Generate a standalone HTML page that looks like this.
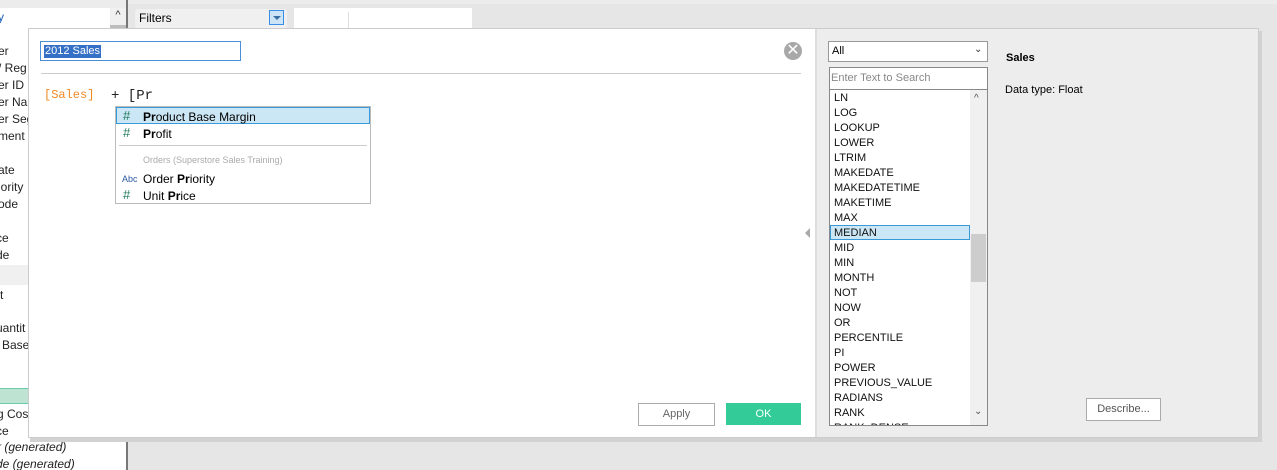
<!DOCTYPE html>
<html><head><meta charset="utf-8"><style>
*{margin:0;padding:0;box-sizing:border-box}
html,body{width:1277px;height:470px;overflow:hidden}
body{background:#e6e6e6;font-family:"Liberation Sans",sans-serif;font-size:11px;color:#000;position:relative}
.a{position:absolute}
.lp div{position:absolute;left:0;font-size:12px;white-space:nowrap;color:#222}
.fl div{position:absolute;left:5px;font-size:11px;white-space:nowrap;color:#111}
</style></head><body>
<div class="a" style="left:0;top:0;width:128px;height:470px;background:#fff"></div>
<div class="a" style="left:0;top:0;width:128px;height:8px;background:#ececec"></div>
<div class="a" style="left:110px;top:8px;width:16px;height:22px;background:#f0f0f0"></div>
<div class="a" style="left:110px;top:25px;width:16px;height:5px;background:#bdbdbd"></div>
<div class="a" style="left:110px;top:9px;width:16px;height:14px;text-align:center;font-size:11px;color:#333">^</div>
<div class="a" style="left:126px;top:0;width:2px;height:470px;background:#777"></div>
<div class="a" style="left:0;top:265px;width:126px;height:20px;background:#f0f0f0"></div>
<div class="a" style="left:0;top:388px;width:126px;height:16px;background:#bfe3d2;border-top:1px solid #6ccbad;border-bottom:1px solid #6ccbad"></div>
<div class="lp">
<div style="top:10px;left:-2px;color:#1a5fb4">y</div>
<div style="top:44px;left:-2px">er</div>
<div style="top:61px;left:-2px">/ Reg</div>
<div style="top:78px;left:-2px">er ID</div>
<div style="top:95px;left:-2px">er Na</div>
<div style="top:112px;left:-2px">er Seg</div>
<div style="top:129px;left:-2px">ment</div>
<div style="top:163px;left:-2px">ate</div>
<div style="top:180px;left:-2px">iority</div>
<div style="top:197px;left:-2px">ode</div>
<div style="top:231px;left:-4px">ce</div>
<div style="top:248px;left:-4px">de</div>
<div style="top:288px;left:0px">t</div>
<div style="top:321px;left:-4px">uantit</div>
<div style="top:338px;left:2px">Base</div>
<div style="top:407px;left:-3px">g Cost</div>
<div style="top:424px;left:-4px">ce</div>
<div style="top:440px;left:-3px;font-style:italic">r (generated)</div>
<div style="top:457px;left:-4px;font-style:italic">de (generated)</div>
</div>
<div class="a" style="left:128px;top:0;width:1149px;height:4px;background:#ececec"></div>
<div class="a" style="left:135px;top:9px;width:152px;height:20px;background:#f0f0f0;border-radius:3px"></div>
<div class="a" style="left:139px;top:11px;font-size:12px">Filters</div>
<div class="a" style="left:269px;top:10px;width:15px;height:15px;background:#cde4f7;border:1px solid #3a8ee6"></div>
<div class="a" style="left:273px;top:16px;width:0;height:0;border-left:4px solid transparent;border-right:4px solid transparent;border-top:4px solid #3a6ea5"></div>
<div class="a" style="left:294px;top:8px;width:178px;height:20px;background:#fff"></div>
<div class="a" style="left:348px;top:12px;width:1px;height:16px;background:#ddd"></div>
<div class="a" style="left:30px;top:31px;width:1232px;height:411px;background:#d2d2d2"></div>
<div class="a" style="left:28px;top:28px;width:1231px;height:410px;background:#ededed;border:1px solid #ccc"></div>
<div class="a" style="left:29px;top:29px;width:786px;height:408px;background:#fff"></div>
<div class="a" style="left:815px;top:29px;width:2px;height:408px;background:#ddd"></div>
<div class="a" style="left:40px;top:41px;width:201px;height:20px;border:1px solid #4a90d9;background:#fff"></div>
<div class="a" style="left:44px;top:45px;background:#3470c6;color:#fff;font-size:11px;padding:0 1px;line-height:13px">2012 Sales</div>
<div class="a" style="left:784px;top:42px;width:18px;height:18px;border-radius:50%;background:#a8a8a8;color:#fff;font-size:16px;line-height:18px;text-align:center">✕</div>
<div class="a" style="left:41px;top:73px;width:760px;height:1px;background:#ccc"></div>
<div class="a" style="left:44px;top:88px;font-family:'Liberation Mono',monospace;font-size:12px;color:#f08a24">[Sales]</div>
<div class="a" style="left:111px;top:88px;font-family:'Liberation Mono',monospace;font-size:14px;color:#222">+ [Pr</div>
<div class="a" style="left:115px;top:106px;width:256px;height:98px;background:#fff;border:1px solid #bbb"></div>
<div class="a" style="left:116px;top:107px;width:254px;height:17px;background:#cbe6f4;border:1px solid #3a9ad9"></div>
<div class="a" style="left:119px;top:145px;width:248px;height:1px;background:#ccc"></div>
<div class="a" style="left:123px;top:108px;color:#1f7a5c;font-size:13px">#</div>
<div class="a" style="left:143px;top:110px;font-size:12px"><b>Pr</b>oduct Base Margin</div>
<div class="a" style="left:123px;top:125px;color:#1f7a5c;font-size:13px">#</div>
<div class="a" style="left:143px;top:127px;font-size:12px"><b>Pr</b>ofit</div>
<div class="a" style="left:143px;top:155px;font-size:9px;color:#aaa">Orders (Superstore Sales Training)</div>
<div class="a" style="left:122px;top:174px;color:#2c5aa0;font-size:9px">Abc</div>
<div class="a" style="left:143px;top:172px;font-size:12px">Order <b>Pr</b>iority</div>
<div class="a" style="left:123px;top:187px;color:#1f7a5c;font-size:13px">#</div>
<div class="a" style="left:143px;top:189px;font-size:12px">Unit <b>Pr</b>ice</div>
<div class="a" style="left:638px;top:403px;width:77px;height:23px;border:1px solid #aaa;background:#fff;text-align:center;line-height:21px;color:#666">Apply</div>
<div class="a" style="left:726px;top:403px;width:75px;height:22px;background:#33cc99;text-align:center;line-height:22px;color:#fff">OK</div>
<div class="a" style="left:805px;top:228px;width:0;height:0;border-top:5px solid transparent;border-bottom:5px solid transparent;border-right:5px solid #aaa"></div>
<div class="a" style="left:828px;top:41px;width:160px;height:21px;border:1px solid #999;background:#fff"></div>
<div class="a" style="left:832px;top:45px">All</div>
<div class="a" style="left:974px;top:44px;font-size:10px;color:#333">&#8964;</div>
<div class="a" style="left:829px;top:67px;width:159px;height:359px;border:1px solid #888;background:#fff"></div>
<div class="a" style="left:830px;top:89px;width:157px;height:1px;background:#888"></div>
<div class="a" style="left:831px;top:72px;color:#888">Enter Text to Search</div>
<div class="a" style="left:970px;top:90px;width:17px;height:335px;background:#f0f0f0"></div>
<div class="a" style="left:971px;top:234px;width:15px;height:48px;background:#cdcdcd"></div>
<div class="a" style="left:974px;top:93px;font-size:10px;color:#555">^</div>
<div class="a" style="left:974px;top:406px;font-size:10px;color:#555">&#8964;</div>
<div class="a" style="left:830px;top:225px;width:140px;height:15px;background:#cbe6f4;border:1px solid #3a9ad9"></div>
<div class="a fl" style="left:829px;top:91px;width:141px;height:334px;overflow:hidden">
<div style="top:1px">LN</div><div style="top:16px">LOG</div><div style="top:31px">LOOKUP</div><div style="top:46px">LOWER</div><div style="top:61px">LTRIM</div><div style="top:76px">MAKEDATE</div><div style="top:91px">MAKEDATETIME</div><div style="top:106px">MAKETIME</div><div style="top:121px">MAX</div><div style="top:136px">MEDIAN</div><div style="top:151px">MID</div><div style="top:166px">MIN</div><div style="top:181px">MONTH</div><div style="top:196px">NOT</div><div style="top:211px">NOW</div><div style="top:226px">OR</div><div style="top:241px">PERCENTILE</div><div style="top:256px">PI</div><div style="top:271px">POWER</div><div style="top:286px">PREVIOUS_VALUE</div><div style="top:301px">RADIANS</div><div style="top:316px">RANK</div><div style="top:331px">RANK_DENSE</div>
</div>
<div class="a" style="left:1006px;top:52px;font-weight:bold;font-size:11px">Sales</div>
<div class="a" style="left:1005px;top:84px">Data type: Float</div>
<div class="a" style="left:1086px;top:398px;width:75px;height:23px;border:1px solid #aaa;background:#fff;text-align:center;line-height:21px;color:#555">Describe...</div>
</body></html>
